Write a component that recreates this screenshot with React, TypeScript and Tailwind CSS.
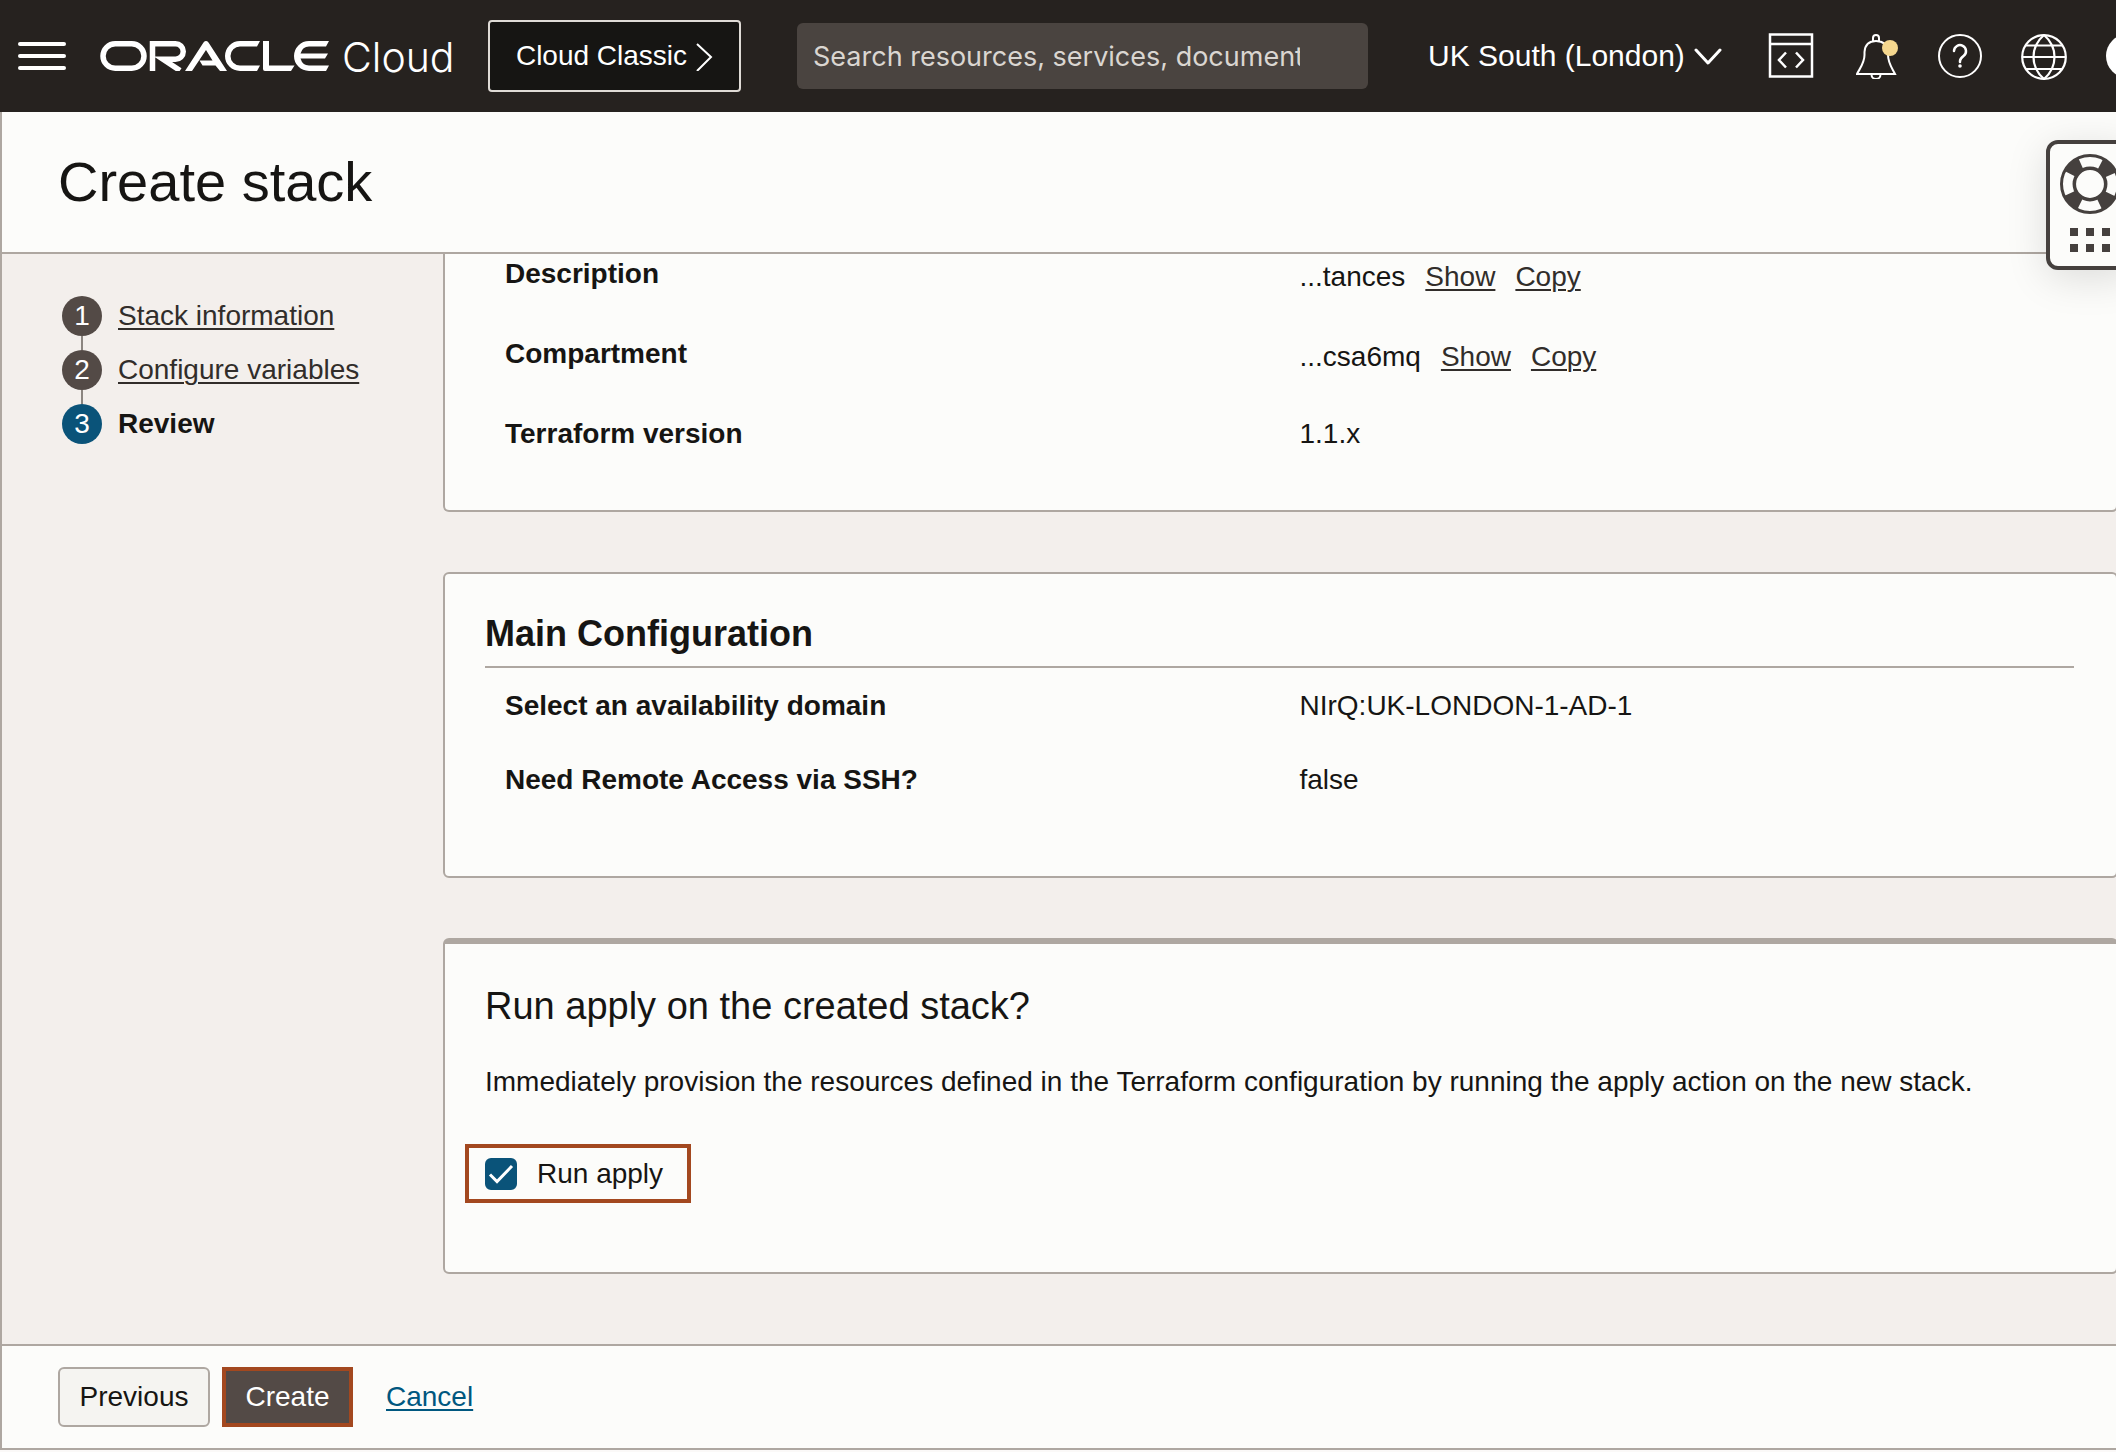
import React, { useState } from "react";

const LINK = "text-[#312d2a] underline decoration-2 underline-offset-3";
const CARD = "-mr-0.5 border-2 border-[#aea7a1] bg-[#fcfcfa] pl-10 pr-[42px]";

function OracleMark() {
  return (
    <svg role="img" aria-label="Oracle" width="230" height="30" viewBox="0 0 230 30" fill="none">
      <rect x="3" y="2.750" width="41" height="24.500" rx="12.250" stroke="#fff" strokeWidth="5.500" />
      <path d="M52.500 30V2.750H75.500a7.750 7.750 0 0 1 0 15.500H63L80 29.500" stroke="#fff" strokeWidth="5.500" />
      <path d="M85 30 103.500 1.500Q106 -1.300 108.500 1.500L127 30H120L115.500 24.500H102.500L99.500 19.500H112.500L106 9 92 30z" fill="#fff" />
      <path d="M160 0H140a15 15 0 0 0 0 30h17l3-5.500h-20a9.500 9.500 0 0 1 0-19h17z" fill="#fff" />
      <path d="M163 0h6v24.500h25.500l-3.500 5.500h-26q-2 0-2-2z" fill="#fff" />
      <path d="M229 0H209a15 15 0 0 0 0 30h17l3-5.500h-20q-6.500 0-8.500-7h24.500l3-5h-27.500q2-7 8.500-7h17z" fill="#fff" />
    </svg>
  );
}

function TopBar() {
  return (
    <header className="flex h-28 shrink-0 items-center overflow-hidden bg-[#26221f] pl-[18px] text-white">
      <button aria-label="Open navigation menu" className="flex w-12 shrink-0 flex-col gap-2">
        <span className="h-1 rounded-full bg-white" />
        <span className="h-1 rounded-full bg-white" />
        <span className="h-1 rounded-full bg-white" />
      </button>
      <a href="#" className="ml-[34px] flex shrink-0 items-center gap-3">
        <OracleMark />
        <span className="w-[112px] pt-0.5 font-['Inter',sans-serif] text-[41px] font-light leading-none">Cloud</span>
      </a>
      <button className="ml-[34px] flex h-[72px] w-[253px] shrink-0 items-center justify-center gap-2 rounded border-2 border-[#dfdbd6] bg-[#161513]">
        Cloud Classic
        <svg width="18" height="30" viewBox="0 0 18 30" fill="none" stroke="currentColor" strokeWidth="2"><path d="M2 3 16 16 2 30" /></svg>
      </button>
      <input
        type="text"
        aria-label="Search"
        placeholder="Search resources, services, documentation"
        className="ml-14 h-[66px] min-w-0 flex-1 rounded-md bg-[#4a4440] pl-4 pr-[68px] font-['Inter',sans-serif] text-[27px] placeholder:text-[#dad6d1]"
      />
      <button className="ml-[60px] flex w-[294px] shrink-0 items-center justify-between whitespace-nowrap text-[30px]">
        UK South (London)
        <svg width="28" height="20" viewBox="0 0 28 20" fill="none" stroke="currentColor" strokeWidth="3" strokeLinecap="round" strokeLinejoin="round">
          <path d="M2 4 14 17 26 4" />
        </svg>
      </button>
      <button aria-label="Developer tools" className="ml-[46px] shrink-0">
        <svg width="46" height="46" viewBox="0 0 46 46" fill="none" stroke="currentColor" strokeWidth="2.500">
          <path d="M2 1.500H44V43.500H2zM2 11H44M18 19.500 11 27 18 34.500M28 19.500 35 27 28 34.500" />
        </svg>
      </button>
      <button aria-label="Announcements" className="ml-[42px] shrink-0">
        <svg width="42" height="46" viewBox="0 0 42 46" fill="none" stroke="currentColor" strokeWidth="2">
          <path d="M17 8V5a3 3 0 0 1 6 0v3M1 41H39C36 35 32 30 32 22V19C32 12 27 8 20 8S9 12 8.500 19V22C8.500 30 4 35 1 41zM15.500 41.500a4.500 4.500 0 0 0 9 0" />
          <circle cx="34" cy="15" r="8" fill="#f5d78e" stroke="none" />
        </svg>
      </button>
      <button aria-label="Help" className="ml-10 shrink-0">
        <svg width="44" height="46" viewBox="0 0 44 46" fill="none" stroke="currentColor" strokeWidth="2">
          <circle cx="22" cy="23" r="21" />
          <path d="M16 18a6 6 0 1 1 9.500 5C23 25 22 26 22 28V29" strokeWidth="2.500" strokeLinecap="round" />
          <circle cx="22" cy="33" r="1.800" fill="currentColor" stroke="none" />
        </svg>
      </button>
      <button aria-label="Language" className="ml-[39px] shrink-0">
        <svg width="46" height="48" viewBox="0 0 46 48" fill="none" stroke="currentColor" strokeWidth="2.200">
          <circle cx="23" cy="25" r="21.800" />
          <path d="M23 3C9 15 9 35 23 47C37 35 37 15 23 3M1 25H45M5 13.500H41M5 37H41" />
        </svg>
      </button>
      <button aria-label="Profile" className="ml-[39px] w-[10px] shrink-0">
        <span className="block size-11 rounded-full bg-white" />
      </button>
    </header>
  );
}

function HelpWidget() {
  return (
    <button
      aria-label="Support"
      className="absolute -right-[18px] top-7 z-10 flex h-[130px] w-[88px] flex-col items-center gap-3.5 rounded-xl border-4 border-[#45403e] bg-[#fcfcfa] pt-2.5 shadow-[0_8px_40px_rgba(0,0,0,0.13)]"
    >
      <svg width="60" height="60" viewBox="0 0 60 60" fill="none" stroke="#45403e">
        <circle cx="30" cy="30" r="22.500" strokeWidth="12" strokeDasharray="15 20.343" strokeDashoffset="-10.170" />
        <circle cx="30" cy="30" r="28.500" strokeWidth="3" />
        <circle cx="30" cy="30" r="15.700" strokeWidth="3.500" />
      </svg>
      <svg width="40" height="24" viewBox="0 0 40 24" fill="#45403e">
        <path d="M0 0h8v8H0zM16 0h8v8h-8zM32 0h8v8h-8zM0 16h8v8H0zM16 16h8v8h-8zM32 16h8v8h-8z" />
      </svg>
    </button>
  );
}

function Step({ n, label, current = false }: { n: number; label: string; current?: boolean }) {
  return (
    <li className="flex items-center gap-4">
      <span className={`flex size-10 items-center justify-center rounded-full text-white ${current ? "bg-[#0a5379]" : "bg-[#534a46]"}`}>{n}</span>
      {current ? <span className="font-bold" aria-current="step">{label}</span> : <a href="#" className={LINK}>{label}</a>}
    </li>
  );
}

function Truncated({ text }: { text: string }) {
  return (
    <span className="flex gap-5 pt-[3px]">
      {text}
      <a href="#" className={LINK}>Show</a>
      <a href="#" className={LINK}>Copy</a>
    </span>
  );
}

function Row({ label, className, children }: { label: string; className: string; children: React.ReactNode }) {
  return (
    <div className={`grid grid-cols-2 ${className}`}>
      <dt className="pl-5 font-bold">{label}</dt>
      <dd className="pl-5">{children}</dd>
    </div>
  );
}

export default function App() {
  const [runApply, setRunApply] = useState(true);
  return (
    <div className="flex h-screen flex-col overflow-hidden bg-[#fbf9f8] font-['Liberation_Sans',Arial,sans-serif] text-[28px] leading-8 text-[#161513]">
      <TopBar />
      <div className="relative mb-0.5 flex min-h-0 flex-1 flex-col border-b-2 border-l-2 border-[#aea7a1] bg-[#fcfcfa]">
        <HelpWidget />
        <div className="flex h-[142px] shrink-0 items-center border-b-2 border-[#aea7a1] pl-14">
          <h1 className="text-[56px] leading-[64px]">Create stack</h1>
        </div>

        <div className="flex min-h-0 flex-1 overflow-hidden bg-[#f3efec]">
          <nav aria-label="Steps" className="w-[441px] shrink-0 pl-[60px] pt-[42px]">
            <ol className="flex flex-col">
              <Step n={1} label="Stack information" />
              <li aria-hidden="true" className="ml-[19px] h-3.5 w-0.5 bg-[#8b8580]" />
              <Step n={2} label="Configure variables" />
              <li aria-hidden="true" className="ml-[19px] h-3.5 w-0.5 bg-[#8b8580]" />
              <Step n={3} label="Review" current />
            </ol>
          </nav>

          <main className="flex min-w-0 flex-1 flex-col gap-[60px]">
            <section className={`${CARD} rounded-b-md border-t-0 pb-3 pt-1`}>
              <dl>
                <Row label="Description" className="h-20"><Truncated text="...tances" /></Row>
                <Row label="Compartment" className="h-20"><Truncated text="...csa6mq" /></Row>
                <Row label="Terraform version" className="h-20">1.1.x</Row>
              </dl>
            </section>

            <section className={`${CARD} rounded-md pb-[38px] pt-10`}>
              <h2 className="border-b-2 border-[#aea7a1] pb-3 text-[36px] font-bold leading-10">Main Configuration</h2>
              <dl className="pt-[22px]">
                <Row label="Select an availability domain" className="h-[74px]">NIrQ:UK-LONDON-1-AD-1</Row>
                <Row label="Need Remote Access via SSH?" className="h-[74px]">false</Row>
              </dl>
            </section>

            <section className={`${CARD} flex flex-col items-start rounded-md border-t-[6px] pb-[69px] pt-[42px]`}>
              <h2 className="text-[38px] leading-10">Run apply on the created stack?</h2>
              <p className="mt-10">
                Immediately provision the resources defined in the Terraform configuration by running the apply action on the new stack.
              </p>
              <label className="-ml-5 mt-[46px] flex h-[59px] items-center gap-5 border-4 border-[#a3481f] pl-4 pr-6">
                <span className="grid size-8 shrink-0">
                  <input
                    type="checkbox"
                    checked={runApply}
                    onChange={(e) => setRunApply(e.target.checked)}
                    className="col-start-1 row-start-1 size-8 appearance-none rounded-md border-2 border-[#0a5379] checked:bg-[#0a5379]"
                  />
                  <svg aria-hidden="true" className="pointer-events-none col-start-1 row-start-1" width="32" height="32" viewBox="0 0 32 32" fill="none" stroke="#fff" strokeWidth="3">
                    <path d="M5 16.500 12 23.500 27 8" />
                  </svg>
                </span>
                Run apply
              </label>
            </section>
          </main>
        </div>

        <footer className="flex h-[104px] shrink-0 items-center border-t-2 border-[#aea7a1] pl-14">
          <button className="h-[60px] w-[152px] rounded-md border-2 border-[#aea7a1] bg-[#f5f4f1]">Previous</button>
          <button className="ml-3 h-[60px] w-[131px] border-4 border-[#a3481f] bg-[#534a46] text-white">Create</button>
          <a href="#" className="ml-[33px] text-[#00577f] underline decoration-2 underline-offset-3">Cancel</a>
        </footer>
      </div>
    </div>
  );
}
